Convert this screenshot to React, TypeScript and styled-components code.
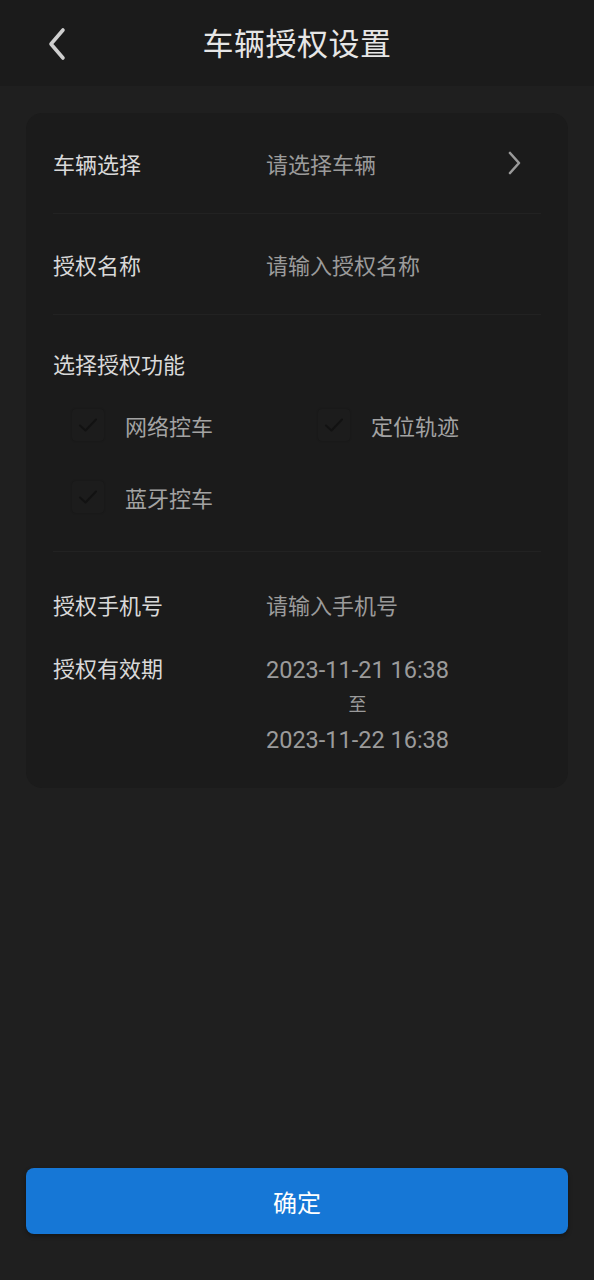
import React from "react";
import styled, { createGlobalStyle } from "styled-components";

const GlobalStyle = createGlobalStyle`
  html, body {
    margin: 0;
    padding: 0;
    background: #1f1f1f;
  }
  body {
    font-family: Roboto, "Noto Sans CJK SC", "Noto Sans", sans-serif;
  }
`;

const Page = styled.div`
  width: 594px;
  height: 1280px;
  background: #1f1f1f;
  display: flex;
  flex-direction: column;
  overflow: hidden;
`;

const Header = styled.div`
  height: 86px;
  background: #1b1b1b;
  display: flex;
  align-items: center;
  justify-content: center;
  position: relative;
  flex-shrink: 0;
`;

const BackButton = styled.div`
  position: absolute;
  left: 42px;
  top: 26px;
  width: 30px;
  height: 36px;
  display: flex;
  align-items: center;
  justify-content: center;
`;

const Title = styled.div`
  font-size: 31px;
  color: #e6e6e6;
  letter-spacing: 0.5px;
  margin-top: -4px;
`;

const Body = styled.div`
  flex: 1;
  display: flex;
  flex-direction: column;
  justify-content: space-between;
  padding: 27px 26px 46px;
`;

const Card = styled.div`
  background: #1b1b1b;
  border-radius: 16px;
  padding: 0 27px 32px;
`;

const Row = styled.div`
  height: 100px;
  display: flex;
  align-items: center;
`;

const Divider = styled.div`
  height: 1px;
  background: #222222;
`;

const Label = styled.div`
  width: 213px;
  flex-shrink: 0;
  font-size: 22px;
  color: #d9d9d9;
`;

const Value = styled.div`
  flex: 1;
  font-size: 22px;
  color: #9b9b9b;
`;

const Chevron = styled.div`
  width: 28px;
  margin-right: 20px;
  display: flex;
  justify-content: flex-end;
`;

const SectionTitle = styled.div`
  font-size: 22px;
  color: #d9d9d9;
  padding-top: 32px;
  padding-bottom: 30px;
`;

const OptionGrid = styled.div`
  display: grid;
  grid-template-columns: 246px 1fr;
  row-gap: 40px;
  padding-left: 19px;
  padding-bottom: 38px;
`;

const Option = styled.div`
  display: flex;
  align-items: center;
  gap: 21px;
`;

const CheckBox = styled.div`
  width: 32px;
  height: 32px;
  border-radius: 4px;
  background: #1c1c1c;
  box-shadow: 0 0 2px rgba(0, 0, 0, 0.25);
  display: flex;
  align-items: center;
  justify-content: center;
`;

const OptionText = styled.div`
  font-size: 22px;
  color: #a3a3a3;
`;

const TopRow = styled.div`
  display: flex;
  align-items: flex-start;
  padding-top: 34px;
`;

const TopLabel = styled(Label)`
  line-height: 32px;
`;

const DateBlock = styled.div`
  display: inline-flex;
  flex-direction: column;
  align-items: center;
  color: #9b9b9b;
`;

const DateText = styled.div`
  font-size: 23.5px;
  line-height: 32px;
`;

const ToText = styled.div`
  font-size: 18px;
  line-height: 38px;
`;

const PhoneRow = styled.div`
  display: flex;
  align-items: center;
  height: 32px;
  margin-top: 36px;
`;

const ConfirmButton = styled.button`
  height: 66px;
  width: 100%;
  border: none;
  border-radius: 8px;
  background: #1677d6;
  color: #ffffff;
  font-family: Roboto, "Noto Sans CJK SC", sans-serif;
  font-size: 24px;
  box-shadow: 0 2px 4px rgba(0, 0, 0, 0.35);
`;

const Check = () => (
  <svg width="20" height="16" viewBox="0 0 20 16" fill="none">
    <path
      d="M2 8.5 L7.5 13.5 L18 2.5"
      stroke="#121212"
      strokeWidth="2"
      strokeLinecap="round"
      strokeLinejoin="round"
    />
  </svg>
);

const options = ["网络控车", "定位轨迹", "蓝牙控车"];

const App = () => {
  return (
    <>
      <GlobalStyle />
      <Page>
        <Header>
          <BackButton>
            <svg width="20" height="34" viewBox="0 0 20 34" fill="none">
              <path
                d="M16 3 L4 17 L16 31"
                stroke="#cfcfcf"
                strokeWidth="3.6"
                strokeLinecap="round"
                strokeLinejoin="round"
              />
            </svg>
          </BackButton>
          <Title>车辆授权设置</Title>
        </Header>
        <Body>
          <Card>
            <Row>
              <Label>车辆选择</Label>
              <Value>请选择车辆</Value>
              <Chevron>
                <svg width="14" height="24" viewBox="0 0 14 24" fill="none">
                  <path
                    d="M3 2 L12 12 L3 22"
                    stroke="#9a9a9a"
                    strokeWidth="2.6"
                    strokeLinecap="round"
                    strokeLinejoin="round"
                  />
                </svg>
              </Chevron>
            </Row>
            <Divider />
            <Row>
              <Label>授权名称</Label>
              <Value>请输入授权名称</Value>
            </Row>
            <Divider />
            <SectionTitle>选择授权功能</SectionTitle>
            <OptionGrid>
              {options.map((o) => (
                <Option key={o}>
                  <CheckBox>
                    <Check />
                  </CheckBox>
                  <OptionText>{o}</OptionText>
                </Option>
              ))}
            </OptionGrid>
            <Divider />
            <PhoneRow>
              <Label>授权手机号</Label>
              <Value>请输入手机号</Value>
            </PhoneRow>
            <TopRow>
              <TopLabel>授权有效期</TopLabel>
              <DateBlock>
                <DateText>2023-11-21 16:38</DateText>
                <ToText>至</ToText>
                <DateText>2023-11-22 16:38</DateText>
              </DateBlock>
            </TopRow>
          </Card>
          <ConfirmButton>确定</ConfirmButton>
        </Body>
      </Page>
    </>
  );
};

export default App;
